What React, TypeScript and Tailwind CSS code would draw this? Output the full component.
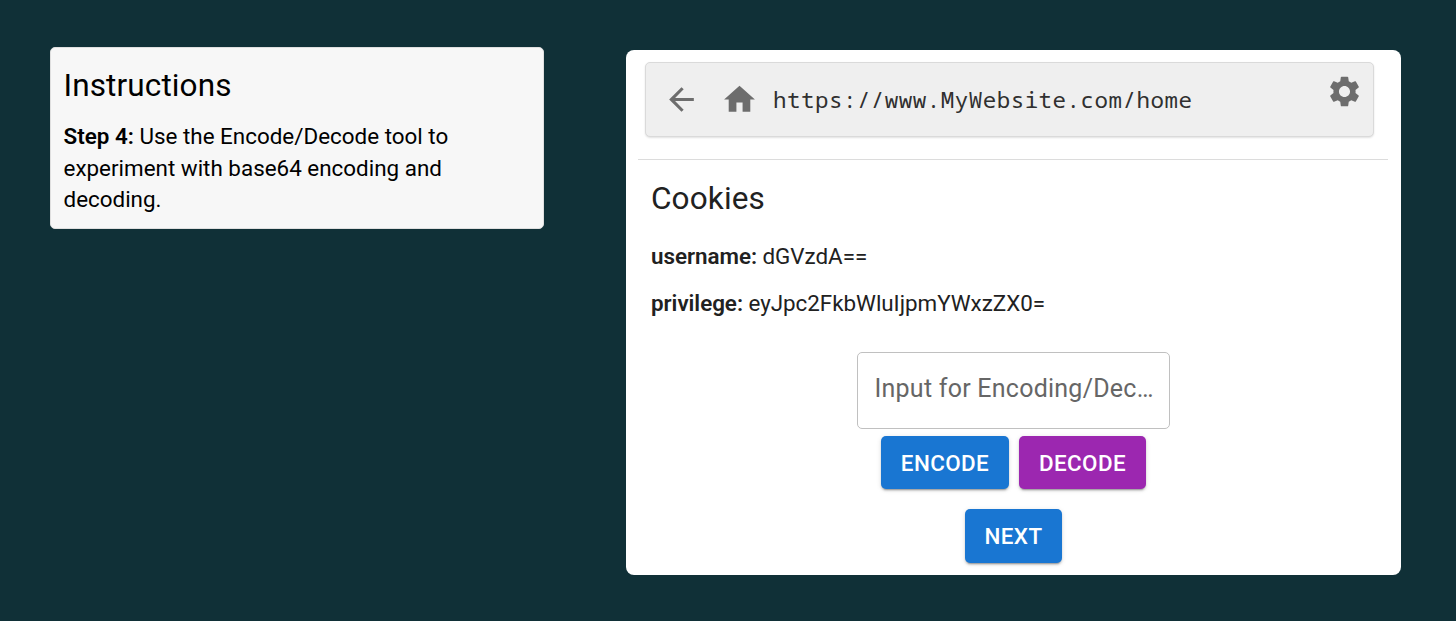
import React from "react";

type ButtonProps = { label: string; className: string };

function ActionButton({ label, className }: ButtonProps) {
  return (
    <button
      className={`rounded-[5px] text-center text-[22.4px] font-[470] leading-[39px] tracking-[0.42px] text-white shadow-[0_3px_1px_-2px_rgba(0,0,0,0.2),0_2px_2px_0_rgba(0,0,0,0.14),0_1px_5px_0_rgba(0,0,0,0.12)] ${className}`}
    >
      {label}
    </button>
  );
}

function AddressBar() {
  return (
    <div className="ml-[7px] flex h-[75px] w-[729px] rounded-[5px] border border-[#dadada] bg-[#efefef] text-[#6d6d6d] shadow-[0_1px_2px_rgba(0,0,0,0.12)]">
      <svg className="ml-[17px] mt-[18px] size-[37px] shrink-0" viewBox="0 0 24 24" fill="currentColor">
        <path d="M20 11H7.83l5.59-5.59L12 4l-8 8 8 8 1.41-1.41L7.83 13H20v-2z" />
      </svg>
      <svg className="ml-[21px] mt-[18px] size-[37px] shrink-0" viewBox="0 0 24 24" fill="currentColor">
        <path d="M10 20v-6h4v6h5v-8h3L12 3 2 12h3v8z" />
      </svg>
      <span className="ml-[15px] mt-[20px] grow font-['Noto_Sans_Mono','DejaVu_Sans_Mono',monospace] text-[22.5px] leading-[34px] tracking-[0.48px] text-[#303030]">
        https://www.MyWebsite.com/home
      </span>
      <svg className="mr-[10px] mt-[10px] size-[37px] shrink-0" viewBox="0 0 24 24" fill="currentColor">
        <path d="M19.14 12.94c.04-.3.06-.61.06-.94 0-.32-.02-.64-.07-.94l2.03-1.58c.18-.14.23-.41.12-.61l-1.92-3.32c-.12-.22-.37-.29-.59-.22l-2.39.96c-.5-.38-1.03-.7-1.62-.94l-.36-2.54c-.04-.24-.24-.41-.48-.41h-3.84c-.24 0-.43.17-.47.41l-.36 2.54c-.59.24-1.13.57-1.62.94l-2.39-.96c-.22-.08-.47 0-.59.22L2.74 8.87c-.12.21-.08.47.12.61l2.03 1.58c-.05.3-.09.63-.09.94s.02.64.07.94l-2.03 1.58c-.18.14-.23.41-.12.61l1.92 3.32c.12.22.37.29.59.22l2.39-.96c.5.38 1.03.7 1.62.94l.36 2.54c.05.24.24.41.48.41h3.84c.24 0 .44-.17.47-.41l.36-2.54c.59-.24 1.13-.56 1.62-.94l2.39.96c.22.08.47 0 .59-.22l1.92-3.32c.12-.22.07-.47-.12-.61l-2.01-1.58zM12 15.6c-1.98 0-3.6-1.62-3.6-3.6s1.62-3.6 3.6-3.6 3.6 1.62 3.6 3.6-1.62 3.6-3.6 3.6z" />
      </svg>
    </div>
  );
}

export default function App() {
  return (
    <div className="flex h-[621px] w-[1456px] items-start bg-[#103037] font-[Roboto,sans-serif]">
      <section className="ml-[50px] mt-[47px] h-[182px] w-[494px] rounded-[5px] border border-[#dfdfdf] bg-[#f7f7f7] pl-[12.5px] text-black">
        <h1 className="mt-[17px] text-[31.5px] leading-[42px] tracking-[0.12px]">Instructions</h1>
        <p className="mt-[14px] w-[440px] text-[22.4px] leading-[31.5px] tracking-[0.01px]">
          <b className="font-semibold">Step 4:</b> Use the Encode/Decode tool to experiment with base64 encoding and decoding.
        </p>
      </section>
      <main className="ml-[82px] mt-[50px] h-[525px] w-[775px] rounded-[8px] bg-white px-3 pt-3 text-[#212121]">
        <AddressBar />
        <hr className="mt-[22px] w-[750px] border-[#dcdcdc]" />
        <div className="pl-[13px]">
          <h2 className="mt-[18px] text-[31.5px] leading-[42px] tracking-[0.12px]">Cookies</h2>
          <p className="mt-[20px] text-[22.4px] leading-[32px] tracking-[-0.03px]">
            <b className="font-semibold">username:</b> dGVzdA==
          </p>
          <p className="mt-[15px] text-[22.4px] leading-[32px] tracking-[-0.03px]">
            <b className="font-semibold">privilege:</b> eyJpc2FkbWluIjpmYWxzZX0=
          </p>
        </div>
        <div className="mt-[33px] flex flex-col items-center">
          <div className="h-[77px] w-[313px] rounded-[5px] border border-[#c0c0c0] pl-[16.5px] pt-[18px] text-[25px] leading-[36px] tracking-[0.24px] text-[#666]">
            Input for Encoding/Dec…
          </div>
          <div className="mt-[7px] flex gap-[10px]">
            <ActionButton label="ENCODE" className="h-[53px] w-[128px] bg-[#1976d2] pt-[2px]" />
            <ActionButton label="DECODE" className="h-[53px] w-[127px] bg-[#9c27b0] pt-[2px]" />
          </div>
          <ActionButton label="NEXT" className="mt-[20px] h-[54px] w-[97px] bg-[#1976d2]" />
        </div>
      </main>
    </div>
  );
}
